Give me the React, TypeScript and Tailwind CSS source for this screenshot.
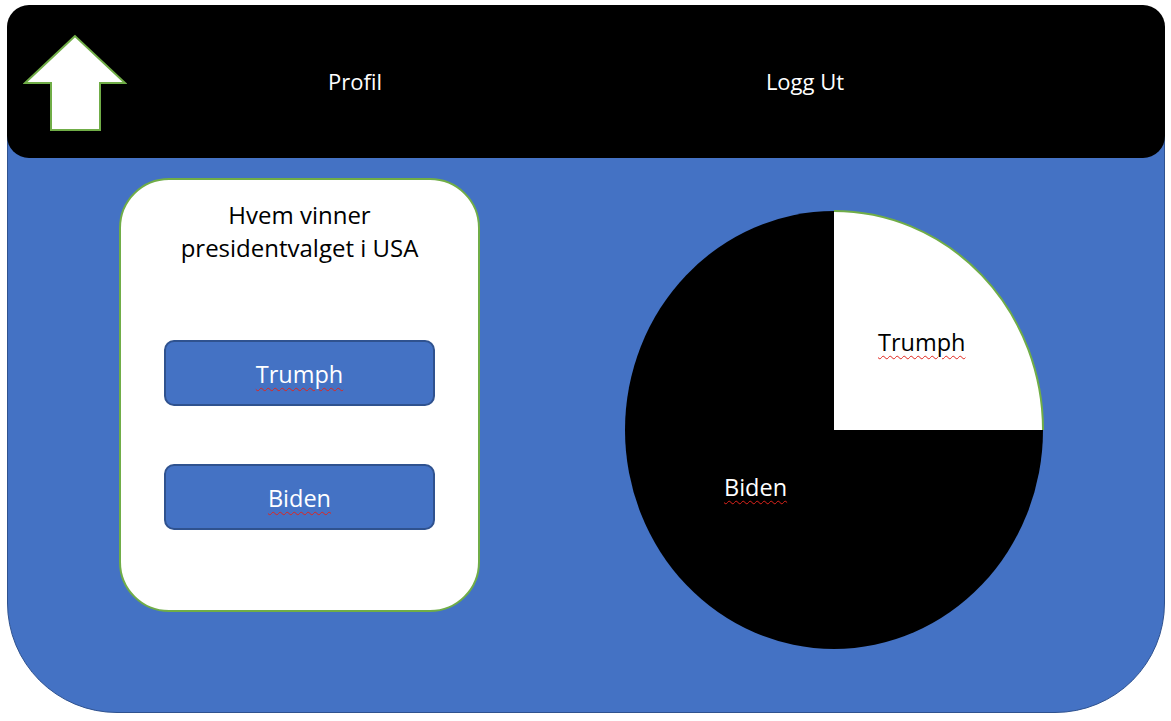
import React from 'react';

const font = { fontFamily: '"Open Sans", "Liberation Sans", sans-serif' };

// red squiggle like a spell-checker marks
const squiggle = 'underline decoration-wavy decoration-[#e0241b] decoration-1 underline-offset-[4px]';

function HomeArrow() {
  return (
    <svg width="104" height="98" viewBox="0 0 104 98" className="block">
      <polygon
        points="52,2 2,49 28,49 28,96 77,96 77,49 102,49"
        fill="#ffffff"
        stroke="#70AD47"
        strokeWidth="2"
      />
    </svg>
  );
}

function VoteButton({ label }: { label: string }) {
  return (
    <button className="w-[271px] h-[66px] rounded-[10px] border-2 border-[#2F528F] bg-[#4472C4] text-white text-[23.5px] flex items-center justify-center pt-[3px]">
      <span className={squiggle}>{label}</span>
    </button>
  );
}

function PieChart() {
  const cx = 210;
  const cy = 220;
  const rx = 209;
  const ry = 219;
  return (
    <div className="relative w-[420px] h-[440px]">
      <svg width="420" height="440" viewBox="0 0 420 440" className="block">
        <ellipse cx={cx} cy={cy} rx={rx} ry={ry} fill="#000000" />
        <path d={`M${cx},${cy} L${cx},${cy - ry} A${rx},${ry} 0 0 1 ${cx + rx},${cy} Z`} fill="#ffffff" />
        <path d={`M${cx},${cy - ry} A${rx},${ry} 0 0 1 ${cx + rx},${cy}`} fill="none" stroke="#70AD47" strokeWidth="2" />
      </svg>
      <span className={`absolute left-[254px] top-[121px] text-[23.5px] text-black leading-none ${squiggle}`}>Trumph</span>
      <span className={`absolute left-[100px] top-[266px] text-[23.5px] text-white leading-none ${squiggle}`}>Biden</span>
    </div>
  );
}

export default function App() {
  return (
    <div className="w-[1171px] h-[721px] bg-white pt-[5px] pl-[7px]" style={font}>
      <div className="w-[1158px] h-[708px] rounded-[110px] bg-[#4472C4] border border-[#2F528F]">
        {/* Top bar */}
        <div className="-mt-px -mx-px h-[153px] rounded-[22px] bg-black flex items-center text-white text-[22px]">
          <div className="w-[117px] pl-[16px] pt-[2px]">
            <HomeArrow />
          </div>
          <span className="w-[462px] text-center">Profil</span>
          <span className="w-[438px] text-center">Logg Ut</span>
        </div>

        {/* Content */}
        <div className="flex items-start pl-[111px] pt-[20px]">
          <div className="w-[361px] h-[434px] rounded-[50px] border-2 border-[#70AD47] bg-white flex flex-col items-center pt-[18px]">
            <h2 className="text-[24px] leading-[33px] text-black text-center">
              Hvem vinner
              <br />
              presidentvalget i USA
            </h2>
            <div className="mt-[76px] flex flex-col gap-[58px]">
              <VoteButton label="Trumph" />
              <VoteButton label="Biden" />
            </div>
          </div>

          <div className="ml-[144px] mt-[32px]">
            <PieChart />
          </div>
        </div>
      </div>
    </div>
  );
}
